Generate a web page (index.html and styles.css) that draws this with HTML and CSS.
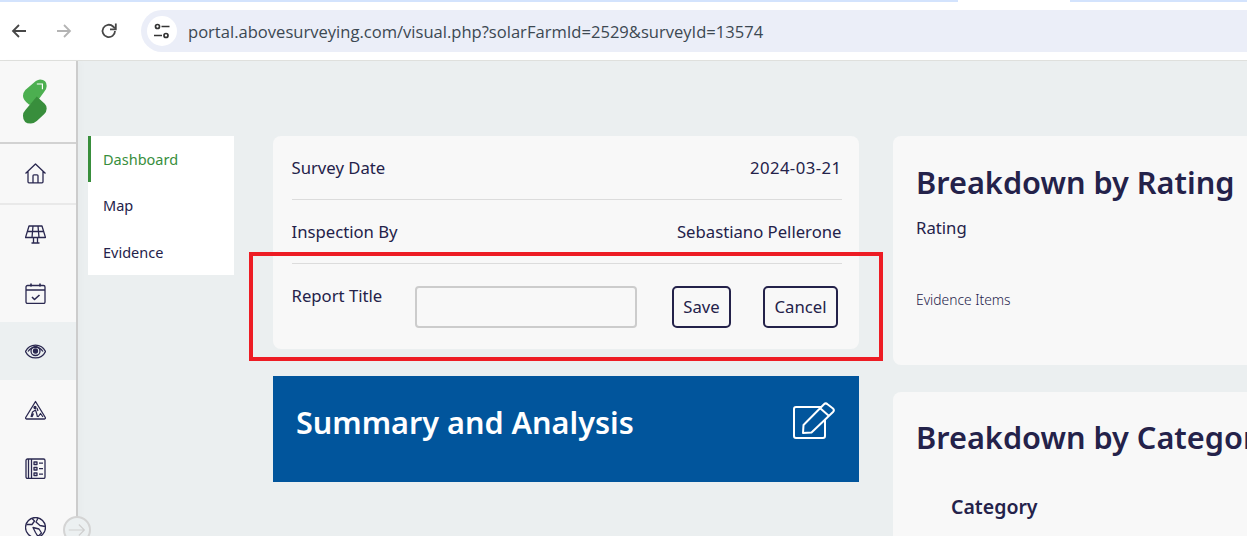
FILE: index.html
```html
<!DOCTYPE html>
<html lang="en">
<head>
<meta charset="utf-8">
<title>Visual</title>
<link rel="stylesheet" href="styles.css">
</head>
<body>
<div class="browser">
  <div class="tabstrip"><span class="tabgap"></span></div>
  <div class="toolbar">
    <svg class="nav-icon" viewBox="0 0 20 20"><path d="M17 10H4M10 4l-6 6 6 6" fill="none" stroke="#474747" stroke-width="1.8"/></svg>
    <svg class="nav-icon" viewBox="0 0 20 20"><path d="M3 10h13M10 4l6 6-6 6" fill="none" stroke="#b4b4b4" stroke-width="1.8"/></svg>
    <svg class="nav-icon" viewBox="0 0 20 20"><path d="M16 10a6.200 6.200 0 1 1-1.900-4.500L16 7.300" fill="none" stroke="#474747" stroke-width="1.8"/><path d="M16.800 2.500v5.800H11" fill="none" stroke="#474747" stroke-width="1.800"/></svg>
    <div class="omnibox">
      <span class="site-chip">
        <svg width="18" height="18" viewBox="0 0 18 18"><g fill="none" stroke="#333" stroke-width="1.700"><circle cx="4.500" cy="4.500" r="2"/><path d="M8.500 4.500h8M1 13.500h8"/><circle cx="13" cy="13.500" r="2"/></g></svg>
      </span>
      <span class="url">portal.abovesurveying.com/visual.php?solarFarmId=2529&amp;surveyId=13574</span>
    </div>
  </div>
</div>
<div class="app">
  <aside class="rail">
    <div class="rail-logo">
      <svg width="28" height="49" viewBox="60 232 85 146">
        <path d="M118 238Q138 238 138 258Q138 268 130 276L104 312L85 315Q66 300 66 288Q66 278 73 270L105 243Q112 238 118 238z" fill="#4caf50"/>
        <path d="M108 290L132 312Q138 318 138 326Q138 336 130 344L108 364Q98 372 90 372Q66 372 66 348Q66 338 74 330z" fill="#388e3c"/>
        <path d="M108 252H125V268" fill="none" stroke="#fff" stroke-width="3.500"/>
      </svg>
    </div>
    <a class="rail-item rail-home"><svg class="ico" viewBox="0 0 21 21"><path d="M.5 10.500 10.500 1 20.500 10.500M3 8.500V18.800a1 1 0 0 0 1 1h13a1 1 0 0 0 1-1V8.500M8 19.800v-7a1 1 0 0 1 1-1h3a1 1 0 0 1 1 1v7"/></svg></a>
    <a class="rail-item rail-solar"><svg class="ico" viewBox="0 0 21 21"><path d="M4 2h13l3.500 11.500H.5zM8 2 7 13.500M13 2l1 11.500M2.500 7.500h16M8.500 13.500v5M12.500 13.500v5M6.500 19h8"/></svg></a>
    <a class="rail-item rail-cal"><svg class="ico" viewBox="0 0 21 21"><rect x="1" y="2.500" width="19" height="18" rx="1.500"/><path d="M1 7h19M6 .5v3M15 .5v3M7 14l2.500 2.500L14.500 12" stroke-width="1.600"/></svg></a>
    <a class="rail-item rail-eye is-current"><svg class="ico" viewBox="0 0 21 21"><path d="M.5 10.500c4-8.500 16-8.500 20 0-4 8.500-16 8.500-20 0zM3 10.500c3.500-5.500 11.500-5.500 15 0"/><circle cx="10.500" cy="10" r="4.500"/><circle cx="10.500" cy="10" r="2" fill="#2a2850"/></svg></a>
    <a class="rail-item rail-warn"><svg class="ico" viewBox="0 0 21 21"><path d="M10.500 1.500 20.300 17.500a1 1 0 0 1-.8 1.500H1.500a1 1 0 0 1-.8-1.500z"/><circle cx="10" cy="7.500" r="1" fill="#2a2850"/><path d="M6 17l1.500-5 3-2 1 3 1 4M8.500 13.500l-1.500 3.500M13 17l2.500-3.500 2.500 3.500M12 8l1 3" stroke-width="1.200"/></svg></a>
    <a class="rail-item rail-book"><svg class="ico" viewBox="0 0 21 21"><rect x="1" y="1" width="19" height="19.500" rx="1.500"/><path d="M3.500 1v19.500M6.500 1v19.500M9 4h3v2.500H9zM9 9.500h3V12H9zM9 15h3v2.500H9zM14 5.200h4M14 10.700h4M14 16.200h4"/></svg></a>
    <a class="rail-item rail-globe"><svg class="ico" viewBox="0 0 21 21"><circle cx="10.500" cy="10.500" r="10"/><path d="M7 1.500 9.500 4 7 7.500 1.500 7.500M13 1.200 11 5l4 3.500 5 1M8 10.500l6 1.500 2.500 4-3.500 3.500-2.500-4z"/></svg></a>
    <span class="rail-toggle"><svg width="24" height="14" viewBox="0 0 24 14"><path d="M3 7h17M14 1l6 6-6 6" fill="none" stroke="#cfcfcf" stroke-width="1.300"/></svg></span>
  </aside>

  <main class="content">
    <nav class="submenu">
      <a class="submenu-item is-active">Dashboard</a>
      <a class="submenu-item">Map</a>
      <a class="submenu-item">Evidence</a>
    </nav>

    <section class="col-left">
      <div class="card info-card">
        <div class="info-row"><span>Survey Date</span><span class="info-date">2024-03-21</span></div>
        <div class="info-row"><span>Inspection By</span><span>Sebastiano Pellerone</span></div>
        <div class="title-row">
          <label class="title-label" for="rt">Report Title</label>
          <input class="title-input" id="rt" type="text">
          <button class="btn btn-save">Save</button>
          <button class="btn btn-cancel">Cancel</button>
        </div>
      </div>
      <div class="banner">
        <h2>Summary and Analysis</h2>
        <svg width="42" height="37" viewBox="0 0 42 37"><g fill="none" stroke="#fff" stroke-width="2" stroke-linejoin="round"><path d="M28 5H3a2 2 0 0 0-2 2V34a2 2 0 0 0 2 2H30a2 2 0 0 0 2-2V18"/><path d="M10 31 10.500 23 31 2.200a2.500 2.500 0 0 1 3.500 0L40 6.500a2.500 2.500 0 0 1 0 3.500L18.500 30.500zM27.500 6.500l8.500 7.500"/></g></svg>
      </div>
    </section>

    <section class="col-right">
      <div class="card rating-card">
        <h2>Breakdown by Rating</h2>
        <p class="rating-label">Rating</p>
        <p class="evidence-label">Evidence Items</p>
      </div>
      <div class="card category-card">
        <h2>Breakdown by Category</h2>
        <h3>Category</h3>
      </div>
    </section>
  </main>
</div>
<div class="annotation"></div>
</body>
</html>
```
FILE: styles.css
```css
* { box-sizing: border-box; }
html, body { margin: 0; height: 100%; overflow: hidden; }
body { width: 1247px; height: 536px; position: relative; font-family: "Noto Sans", sans-serif; color: #24224a; background: #ebeff0; }

.browser { height: 61px; background: #fff; border-bottom: 1px solid #dfe0dd; }
.tabstrip { height: 2px; background: #d3e3fd; display: flex; justify-content: flex-end; padding-right: 177px; }
.tabgap { width: 112px; background: #fff; }
.toolbar { height: 42px; margin-top: 8px; display: flex; align-items: center; padding-left: 9px; }
.nav-icon { width: 20px; height: 20px; margin-right: 25px; flex: none; }
.nav-icon:nth-child(3) { margin-right: 22px; }
.omnibox { flex: 1; height: 42px; background: #ebeef8; border-radius: 21px 0 0 21px; display: flex; align-items: center; padding-left: 6px; }
.site-chip { width: 30px; height: 30px; border-radius: 50%; background: #fff; display: flex; align-items: center; justify-content: center; }
.url { font-family: "Open Sans", sans-serif; font-size: 16.570px; line-height: 24px; padding-top: 1px; color: #3c4852; margin-left: 11px; white-space: nowrap; }

.app { display: flex; height: 475px; }
.rail { width: 78px; flex: none; background: #f8f8f8; border-right: 2px solid #ccc; position: relative; display: flex; flex-direction: column; box-shadow: 4px 0 6px rgba(0,0,0,.015); }
.rail-logo { height: 81px; flex: none; display: flex; align-items: center; justify-content: center; padding-right: 6px; }
.rail-item { flex: none; display: flex; align-items: center; justify-content: center; padding-right: 6px; }
.rail-home { height: 63px; border-top: 2px solid #d2d2d2; border-bottom: 2px solid #e9e9e9; }
.rail-solar { height: 59px; }
.rail-cal { height: 58px; }
.rail-eye { height: 58px; }
.rail-warn { height: 60px; }
.rail-book { height: 57px; }
.rail-globe { height: 60px; }
.is-current { background: #ecf0f1; }
.ico { width: 21px; height: 21px; fill: none; stroke: #2a2850; stroke-width: 1.300; stroke-linejoin: round; }
.rail-toggle { position: absolute; left: 63px; top: 455px; width: 28px; height: 28px; border-radius: 50%; border: 2px solid #d4d4d4; background: #ecf0f1; display: flex; align-items: center; justify-content: center; }
.rail-toggle svg { width: 22px; flex: none; }

.content { flex: 1; min-width: 0; display: flex; align-items: flex-start; padding: 75px 0 0 10px; }
.submenu { width: 146px; flex: none; height: 139px; background: #fff; display: flex; flex-direction: column; }
.submenu-item { height: 46.500px; display: flex; align-items: center; padding-left: 15px; font-size: 14.500px; color: #24224a; }
.submenu-item.is-active { color: #388e3c; border-left: 3px solid #388e3c; padding-left: 12px; }

.col-left { width: 586px; flex: none; margin-left: 39px; }
.col-right { width: 400px; flex: none; margin-left: 34px; }
.card { background: #f8f8f8; border-radius: 8px; }

.info-card { height: 213px; padding: 19px 17.500px 0 18.500px; font-size: 16.700px; }
.info-row { display: flex; justify-content: space-between; height: 45px; line-height: 26px; border-bottom: 1px solid #dcdcdc; }
.info-row + .info-row { margin-top: 19px; }
.info-date { letter-spacing: .45px; }
.title-row { display: flex; padding-top: 21px; align-items: flex-start; }
.title-label { width: 123.500px; line-height: 22px; flex: none; }
.title-input { width: 222px; height: 42px; margin-top: 1px; flex: none; background: #f8f8f8; border: 2px solid #ccc; border-radius: 4px; }
.btn { height: 42px; margin-top: 1px; font: inherit; color: #24224a; background: transparent; border: 2px solid #24224a; border-radius: 5px; padding: 0 0 2px; }
.btn-save { width: 59px; margin-left: 35px; }
.btn-cancel { width: 75px; margin-left: 32px; }

.banner { margin-top: 27px; height: 106px; background: #01559c; display: flex; align-items: center; justify-content: space-between; padding: 0 24px 0 23px; color: #fff; }
.banner h2 { margin: 0 0 14px; font-size: 30.600px; font-weight: 600; line-height: 1; }
.banner svg { margin-bottom: 18px; flex: none; }

.rating-card { height: 229px; padding: 24px 0 0 23px; white-space: nowrap; overflow: hidden; }
.col-right h2 { margin: 0; font-size: 30.700px; font-weight: 600; line-height: 44px; color: #24224a; white-space: nowrap; }
.rating-label { margin: 13px 0 0; font-size: 16.700px; line-height: 22px; }
.evidence-label { margin: 52px 0 0; font-size: 13.800px; font-weight: 300; line-height: 18px; }
.category-card { margin-top: 27px; height: 160px; padding: 23px 0 0 23px; overflow: hidden; }
.category-card h3 { margin: 34px 0 0 35px; font-size: 19.500px; font-weight: 600; line-height: 28px; }

.annotation { position: absolute; left: 249px; top: 252px; width: 634px; height: 109px; border: 4px solid #ed1c24; pointer-events: none; }
```
